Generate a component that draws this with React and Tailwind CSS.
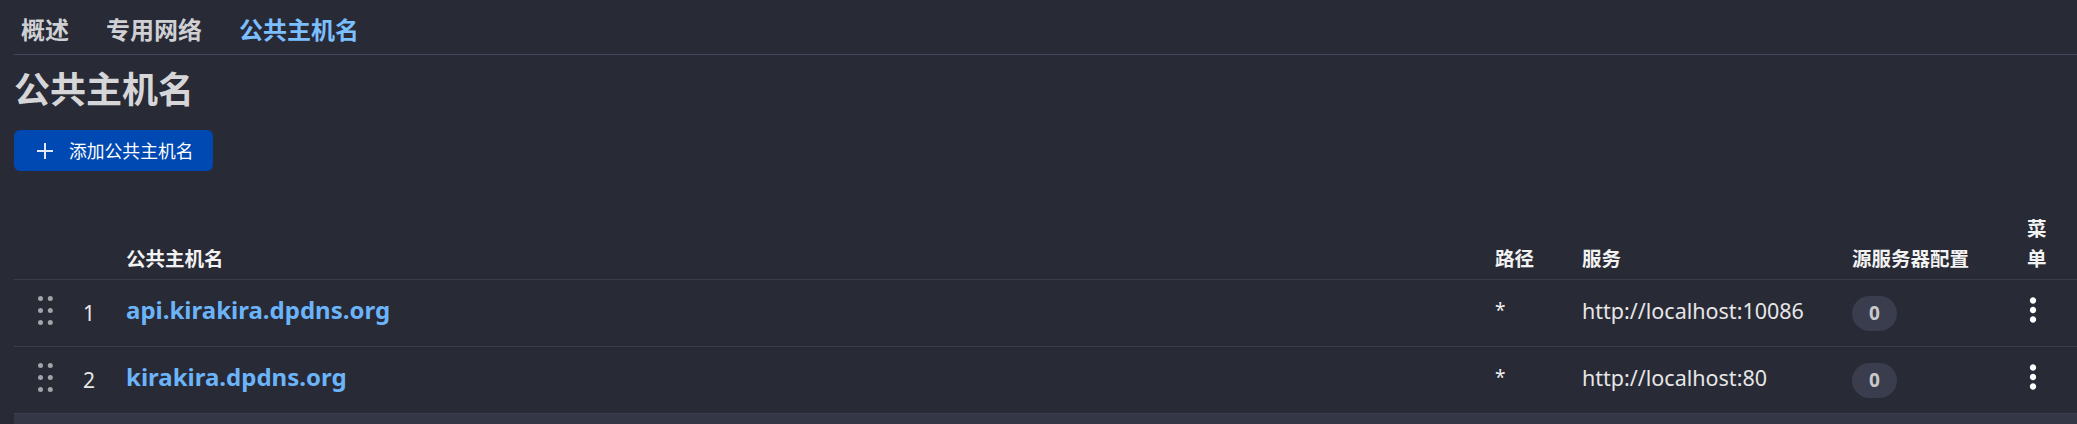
import React from "react";

const rows = [
  { n: 1, host: "api.kirakira.dpdns.org", path: "*", svc: "http://localhost:10086", cnt: 0 },
  { n: 2, host: "kirakira.dpdns.org", path: "*", svc: "http://localhost:80", cnt: 0 },
];

function DragHandle() {
  return (
    <svg width="15" height="29" viewBox="0 0 15 29" className="mb-[6px]">
      {[2.5, 14.5, 26.5].map((cy) => (
        <g key={cy} fill="#a3a3a8">
          <circle cx="2.5" cy={cy} r="2.5" />
          <circle cx="12.3" cy={cy} r="2.5" />
        </g>
      ))}
    </svg>
  );
}

function MoreVert() {
  return (
    <svg width="38" height="38" viewBox="0 0 24 24" fill="#ffffff" className="-ml-[13px] mb-[6px]">
      <path d="M12 8c1.1 0 2-.9 2-2s-.9-2-2-2-2 .9-2 2 .9 2 2 2zm0 2c-1.1 0-2 .9-2 2s.9 2 2 2 2-.9 2-2-.9-2-2-2zm0 6c-1.1 0-2 .9-2 2s.9 2 2 2 2-.9 2-2-.9-2-2-2z" />
    </svg>
  );
}

export default function App() {
  return (
    <div className="min-h-screen w-full overflow-hidden bg-[#282a36] pl-[14px] font-['Noto_Sans','Noto_Sans_CJK_SC',sans-serif]">
      {/* Tabs */}
      <div className="flex h-[55px] items-center gap-[37px] border-b border-[#44475a] pl-[7px] pt-[6px]">
        <span className="text-[24px] font-bold leading-[24px] text-[#cfd0d4]">概述</span>
        <span className="text-[24px] font-bold leading-[24px] text-[#cfd0d4]">专用网络</span>
        <span className="text-[24px] font-bold leading-[24px] text-[#7cbfff]">公共主机名</span>
      </div>

      {/* Heading */}
      <h1 className="mt-[17px] text-[36px] font-bold leading-[36px] text-[#d6d6d8]">公共主机名</h1>

      {/* Add button */}
      <button className="mt-[22px] flex h-[41px] items-center gap-[15px] rounded-[6px] bg-[#0048b2] pl-[22px] pr-[20px]">
        <svg width="18" height="18" viewBox="0 0 18 18" stroke="#e3e9f7" strokeWidth="2">
          <line x1="9" y1="1" x2="9" y2="17" />
          <line x1="1" y1="9" x2="17" y2="9" />
        </svg>
        <span className="text-[17.8px] leading-[20px] text-white">添加公共主机名</span>
      </button>

      {/* Table */}
      <div className="mt-[38px]">
        <div className="grid grid-cols-[56px_56px_1369px_87px_270px_155px_70px] items-end border-b border-[#3a3d4e] pb-[5px] pt-[5px] text-[19.5px] font-bold leading-[30px] text-[#f2f2f2]">
          <div />
          <div />
          <div>公共主机名</div>
          <div>路径</div>
          <div>服务</div>
          <div>源服务器配置</div>
          <div className="pl-[20px] pr-[26px]">菜单</div>
        </div>

        {rows.map((r) => (
          <div
            key={r.n}
            className="grid h-[67px] grid-cols-[56px_56px_1369px_87px_270px_155px_70px] items-center border-b border-[#3a3d4e]"
          >
            <div className="flex items-center pl-[24px]">
              <DragHandle />
            </div>
            <div className="pl-[13px] text-[21px] leading-[24px] text-[#e8e8e8]">{r.n}</div>
            <div className="mb-[6px] text-[24px] font-bold leading-[28px] text-[#6cb4fa]">{r.host}</div>
            <div className="mb-[6px] text-[19px] leading-[24px] text-[#f0f0f0]">{r.path}</div>
            <div className="mb-[4px] text-[21.5px] leading-[24px] text-[#e6e6e6]">{r.svc}</div>
            <div>
              <div className="flex h-[35px] w-[45px] items-center justify-center rounded-full bg-[#3a3d4d] text-[19px] font-bold leading-[20px] text-[#c9c9cc]">
                {r.cnt}
              </div>
            </div>
            <div className="flex items-center pl-[20px]">
              <MoreVert />
            </div>
          </div>
        ))}

        <div className="h-[10px] bg-[#343746]" />
      </div>
    </div>
  );
}
